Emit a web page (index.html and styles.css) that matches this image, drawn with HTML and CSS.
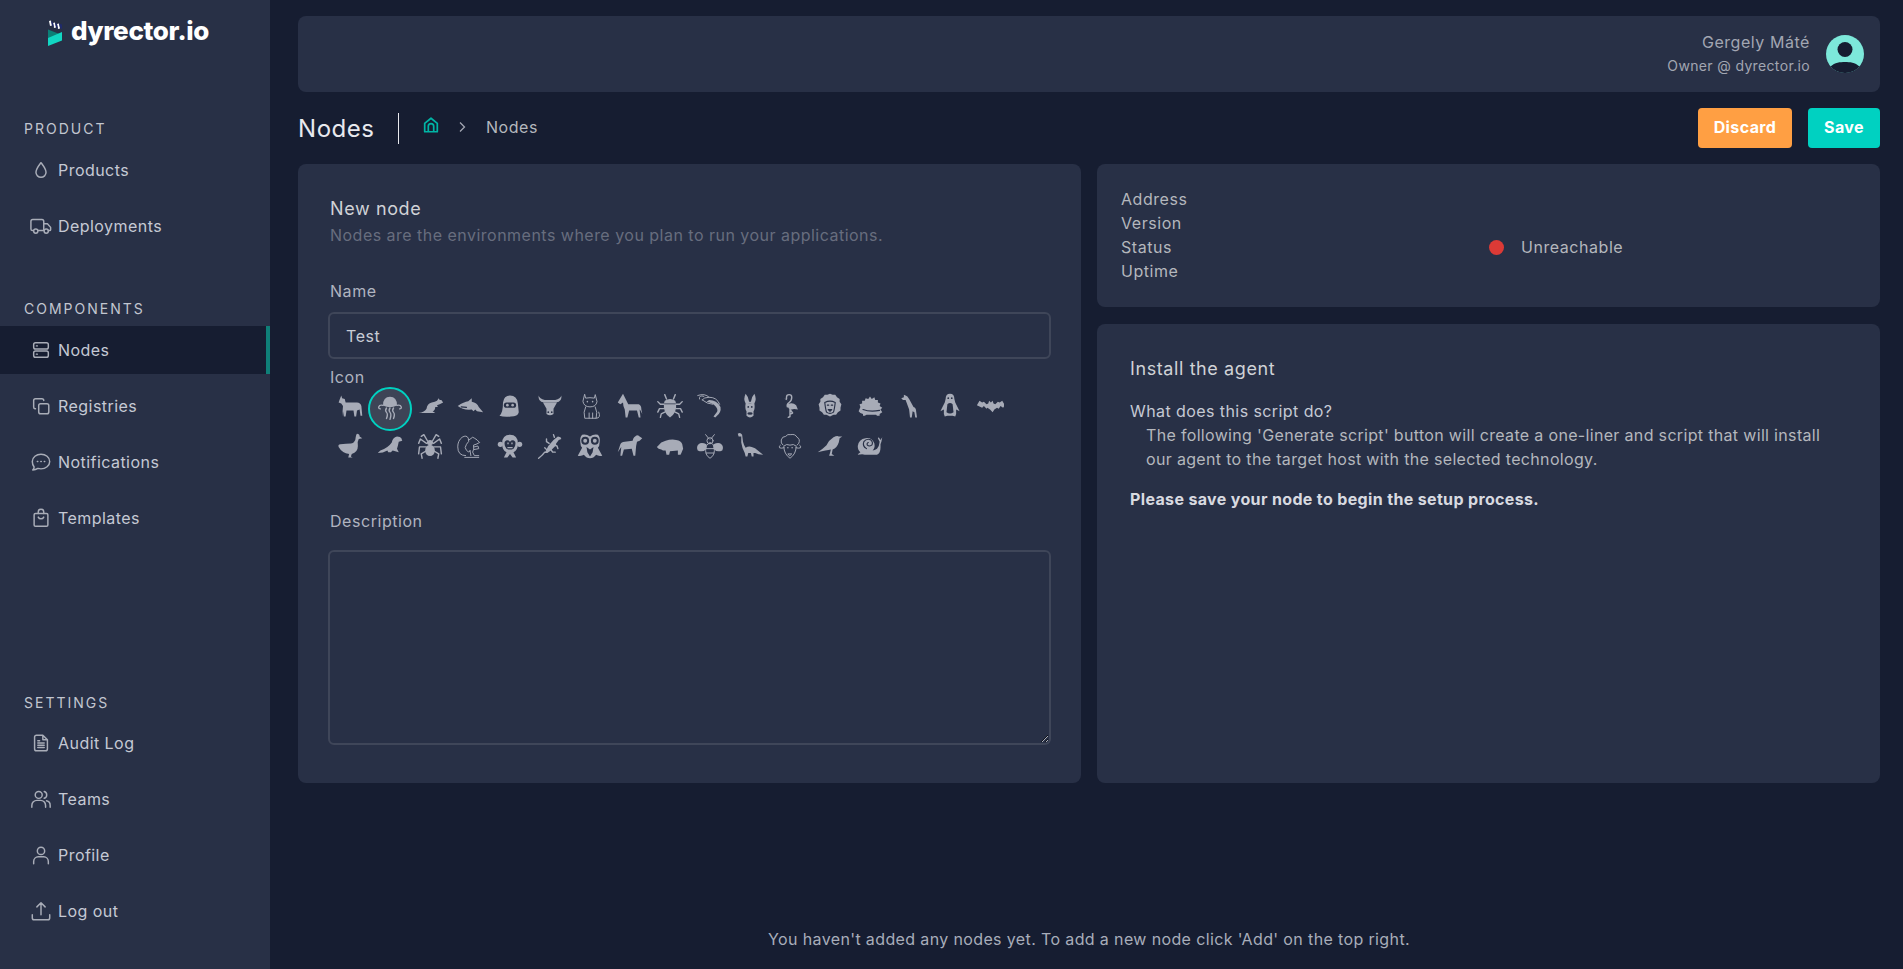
FILE: index.html
```html
<!DOCTYPE html>
<html lang="en">
<head>
<meta charset="utf-8">
<title>Nodes - dyrector.io</title>
<link rel="stylesheet" href="styles.css">
</head>
<body>
<svg class="defs" xmlns="http://www.w3.org/2000/svg">
  <symbol id="a-goat" viewBox="0 0 32 32"><path d="M4 9 6 4l1 3 3 1 1 4 13 0q4 0 5 4l1 11h-2l-1-7-3 1-1 7h-2l-1-7h-8l-1 7h-2l-1-6-1 6H7l1-12-2-3-3-1z"/></symbol>
  <symbol id="a-jelly" viewBox="0 0 32 32"><path d="M8 13Q8 3 16 3t8 10q-4 2-8 2t-8-2z"/><path class="ln" d="M8 13q-4-1-5 2 0 2 2 2M24 13q4-1 5 2 0 2-2 2M12 16q-2 3 0 5t0 7M16 16q-2 3 0 5t0 8M20 16q-2 3 0 5t0 7"/></symbol>
  <symbol id="a-roo" viewBox="0 0 32 32"><path d="M3 24q7-1 9-5 1-6 6-7 4-1 6-2l2-3 1 2h2l2 3-4 2-3 1 1 2h-3q0 4-3 5l3 2h-8q-6 0-11 0z"/></symbol>
  <symbol id="a-shark" viewBox="0 0 32 32"><path d="M2 16q7-5 12-5.500L18 7v4q6 1 8 6l5 6-7-1-2-2-2 2-2-2q-10 1-16-4z"/><path class="cutln" d="M6 17l6 .5"/></symbol>
  <symbol id="a-yeti" viewBox="0 0 32 32"><path d="M4 27q4-3 4-15Q9 4 16 4q8 0 9 9l1 10q-1 5-9 5-8 1-13-1z"/><rect class="cut" x="9" y="12" width="14" height="6" rx="3"/><circle cx="13" cy="15" r="1.500"/><circle cx="19" cy="15" r="1.500"/></symbol>
  <symbol id="a-bull" viewBox="0 0 32 32"><path d="M3 4q-1 7 6 8h14q7-1 6-8-1 4-7 5H10Q4 8 3 4z"/><path d="M8 12l4 7v6q4 3 8 0v-6l4-7z"/><circle class="cut" cx="14" cy="23" r="1"/><circle class="cut" cx="18" cy="23" r="1"/></symbol>
  <symbol id="a-cat" viewBox="0 0 32 32"><path class="ln1" d="M10 3l1 4q5-1 10 0l1-4 2 8q-1 6-8 6t-8-6zM11 17q-3 6-1 13h13q2-7-1-13M15 30v-6M19 30v-6M23 30q6 0 3-7"/><circle cx="13" cy="11" r=".9"/><circle cx="19" cy="11" r=".9"/></symbol>
  <symbol id="a-horse" viewBox="0 0 32 32"><path d="M8 2l2 4 4 8h12q3 1 3 6l1 5-2-4-1-1 1 9h-2l-2-8h-9l-2 8h-2l-1-9q-2-4-2-8l-3 2-3-2z"/></symbol>
  <symbol id="a-beetle" viewBox="0 0 32 32"><path d="M10 10q6-4 12 0l1 3H9zM9 14h14q1 10-7 15-8-5-7-15z"/><path class="ln" d="M12 8L10 3M20 8l2-5M9 14H5L2 11M9 19H4l-2 4M10 23l-4 2-1 4M23 14h4l3-3M23 19h5l2 4M22 23l4 2 1 4"/></symbol>
  <symbol id="a-shrimp" viewBox="0 0 32 32"><path class="ln1" d="M4 8Q3 3 9 5M2 4q8-3 13 2M7 9q2-3 8-3 9 0 12 8M7 9q6 5 12 5"/><path d="M15 9q9 0 13 8 1 6-4 10l-2 2-2-1 3-4q3-3 0-7-4-5-11-6z"/></symbol>
  <symbol id="a-donkey" viewBox="0 0 32 32"><path d="M11 2q-3 6 0 11l1 1 4-1 4 1 1-1q3-5 0-11-3 3-4 9h-2q-1-6-4-9z"/><path d="M11 13q-1 6 1 9l0 5q4 4 8 0v-5q2-3 1-9z"/><circle class="cut" cx="14" cy="17" r="1"/><circle class="cut" cx="18" cy="17" r="1"/><ellipse class="cut" cx="16" cy="24.500" rx="3" ry="1.500"/></symbol>
  <symbol id="a-flamingo" viewBox="0 0 32 32"><path class="ln" d="M12 8V6q0-3 3-3t3 3q0 4-3 6t-2 5M16 20v8l-2 1M16 20l3 4-2 1"/><path class="ln1" d="M11 8l1 1"/><path d="M13 14q6-3 10 1l2 5q-5-1-7 0-4 1-5-6z"/></symbol>
  <symbol id="a-lion" viewBox="0 0 32 32"><path d="M16 2l3 1 3 0 2 3 3 2 0 3 2 3-1 4 0 3-3 2-2 3-3 0-4 2-4-2-3 0-2-3-3-2 0-3-1-4 2-3 0-3 3-2 2-3 3 0z"/><path class="cutln" d="M10 12q6-3 12 0-1 8-2 11-4 3-8 0-1-3-2-11zM13 15h1.500M17.500 15H19M14 20h4l-2 2z"/></symbol>
  <symbol id="a-hedge" viewBox="0 0 32 32"><path d="M3 22l2-5-1-3 3-1v-3h3l1-3 3 1 2-3 2 3 3-2 1 3h3v3l3 1-1 3 3 2-2 2 2 3-3 2v2h-3l-1-1H12l-2 1H8v-2l-3-1z"/><path class="cutln" d="M8 20q8 3 19 1"/></symbol>
  <symbol id="a-giraffe" viewBox="0 0 32 32"><path d="M9 3l2 1 2 1 2 3 5 9q3 1 3 5l1 7h-2l-1-6-2-1-1 7h-2l-1-9-4-11-3 0-2-2 3-1z"/></symbol>
  <symbol id="a-penguin" viewBox="0 0 32 32"><path d="M16 2q5 0 5 6l1 4 3 6 2 4-4-2 0 5-1 3-3-1h-6l-3 1-1-3 0-5-4 2 2-4 3-6 1-4q0-6 5-6z"/><path class="cut" d="M13 14q3-3 6 0l1 9q-4 3-8 0z"/><circle class="cut" cx="14" cy="7" r="1"/><circle class="cut" cx="18" cy="7" r="1"/></symbol>
  <symbol id="a-bat" viewBox="0 0 32 32"><path d="M1 15l3-5 3 2 2-1 3 3 2-1 1-3 2 2 2-2 1 3 2 1 3-3 2 1 3-2 3 5-2 3-3-2-2 3-2-1-3 2-2 3-3-3-3-2-1 1-3-3-2 2z"/></symbol>
  <symbol id="a-duck" viewBox="0 0 32 32"><path d="M24 2q3 0 3 3l3 2-4 1q-2 3-1 8 0 7-7 9l-1 3 2 1h-5l1-4q-8-1-12-8-1-3 2-3 7-1 12-1 3 0 5-4 1-7 2-7z"/></symbol>
  <symbol id="a-seal" viewBox="0 0 32 32"><path d="M24 5q4 0 5 2l1 3-4 1q-1 5-2 8l2 4-7-2-2 2h-3l-1-2q-5 3-11 3l3-3q9-3 13-9 1-6 6-7z"/></symbol>
  <symbol id="a-spider" viewBox="0 0 32 32"><ellipse cx="16" cy="12" rx="3.500" ry="3"/><ellipse cx="16" cy="21" rx="5.500" ry="6.500"/><path class="ln" d="M13 10L9 3 6 5M19 10l4-7 3 2M12 13L5 8 3 13M20 13l7-5 2 5M11 17H4l-1 8M21 17h7l1 8M11 22l-5 3 1 5M21 22l5 3-1 5"/></symbol>
  <symbol id="a-squirrel" viewBox="0 0 32 32"><path class="ln1" d="M11 27Q2 27 2 17q0-7 5-11 5-3 7 1t-2 7q-3 4 0 7 2 3 4 1M15 9l4-3 2 1 3 2 3 3-4 2-3 1q1 5-1 8l2 4h5M21 17l4-1 1 3-5 1M10 29h16M16 21l1 6"/></symbol>
  <symbol id="a-monkey" viewBox="0 0 32 32"><circle cx="5" cy="14" r="3"/><circle cx="27" cy="14" r="3"/><path d="M16 3q9 0 9 10 0 8-5 10l3 6h-4l-3-4-3 4H9l3-6q-5-2-5-10 0-10 9-10z"/><path class="cut" d="M10 11q3-3 6 0 3-3 6 0 1 5-2 8-4 2-8 0-3-3-2-8z"/><path d="M13 17h6v1.500h-6zM13 12h1.500v2H13zM17.500 12H19v2h-1.500z"/></symbol>
  <symbol id="a-lizard" viewBox="0 0 32 32"><path class="ln" d="M3 30q5-4 7-7l1 0"/><path d="M10 24l4-8 6-7 5-4 3 1 1 2-3 1-3 4 0 2-6 6-4 3z"/><path class="ln" d="M15 13l-3-2 0-3M21 15l3 1 1 3M13 21l-3-3M17 20l2 3 3 0M21 6l-1-3"/></symbol>
  <symbol id="a-owl" viewBox="0 0 32 32"><path d="M16 5q4-3 9-2 3 3 2 9 0 4-2 6l5 9q-4 1-7-1-3 4-7 4t-7-4q-3 2-7 1l5-9q-2-2-2-6-1-6 2-9 5-1 9 2z"/><circle class="cut" cx="10.500" cy="10" r="4.500"/><circle class="cut" cx="21.500" cy="10" r="4.500"/><circle cx="10.500" cy="10" r="2.200"/><circle cx="21.500" cy="10" r="2.200"/><path class="cut" d="M12 17l4 3 4-3-1 6-3 5-3-5z"/></symbol>
  <symbol id="a-dog" viewBox="0 0 32 32"><path d="M22 4q3-1 5 1l3 2-3 3-3 1-1 5-1 11h-2l-2-8-9 1-2 7H5l1-10-4 6 3-9q1-3 5-3l9-1q1-5 5-6z"/></symbol>
  <symbol id="a-rhino" viewBox="0 0 32 32"><path d="M1 17l2-2 3-3 5-2q6-2 12-1 6 1 7 5l1 5-2 5-1 2-3 0 0-5-9 1-1 4h-3l-1-5-3 0-2-1-3-1z"/></symbol>
  <symbol id="a-bee" viewBox="0 0 32 32"><path d="M12 14Q6 11 3 14t-1 7q6 3 10-2zM20 14q6-3 9 0t1 7q-6 3-10-2z"/><circle class="ln1" cx="16" cy="10" r="3.500"/><path class="ln1" d="M15 8L11 3M17 8l4-5"/><path class="ln1" d="M16 13q-5 0-5 8 0 6 5 9 5-3 5-9 0-8-5-9zM11 19h10M11.500 24h9"/></symbol>
  <symbol id="a-dino" viewBox="0 0 32 32"><path d="M2 2q3-2 5 1l1 8q1 4 3 7 3-2 7-1t7 4l6 5q-6 0-9-2l-2 0 0 4h-2l-1-4-3 0-1 4h-2l-1-4q-3-5-4-12L6 5H3z"/></symbol>
  <symbol id="a-sheep" viewBox="0 0 32 32"><path class="ln1" d="M8 15q-3-2-2-6t5-4q2-3 6-2 5-1 7 3 4 2 2 7l-2 2M5 15q-2 1-1 3 2 1 5 0M27 15q2 1 1 3-2 1-5 0M9 17q0 8 7 13 7-5 7-13M9 16q3-3 7-1 4-2 7 1M13 18h1M18 18h1M14 25h4l-2 2z"/></symbol>
  <symbol id="a-bird" viewBox="0 0 32 32"><path d="M30 5l-3 2-1 5q-2 6-7 8l-1 5 3 2h-6l1-3 1-4q-5 1-15 3 6-4 10-8 3-6 8-9 4-2 6-1z"/></symbol>
  <symbol id="a-snail" viewBox="0 0 32 32"><path d="M2 26q6-1 8 0h14q4-2 4-8l0-4 1-3 1-5-2 3-2-3-1 1 2 4-1 5-2 3q-3 2-5 2 3-3 2-8-3-7-10-6-8 1-9 9 0 5 3 7-3 2-3 3z"/><path class="cutln" d="M12 19q-5-3-3-8 3-4 8-2 3 3 1 6-3 2-5 0-1-2 1-3"/></symbol>
</svg>

<div class="app">
  <aside class="sidebar">
    <div class="logo">
      <svg class="logo-mark" viewBox="0 0 14 25" xmlns="http://www.w3.org/2000/svg">
        <path class="mark-a" d="M1 0l2-.5 1 5-2 .5zM5 2l2-.5 1 5-2 .5zM9 3l2-.5 1 5-2 .5z"/>
        <path class="mark-b" d="M3-.5l2 2 1 5-2-2zM7 1.500l2 1.500 1 5-2-2zM11 2.500l3 1v5l-2-2z"/>
        <path class="mark-c" d="M0 8.500l14 5.500-14 6z"/>
        <path class="mark-d" d="M0 17L14 11v8.500L0 25z"/>
      </svg>
      <span class="logo-text">dyrector.io</span>
    </div>

    <nav class="groups">
      <div class="group group-product">
        <h4 class="group-title">PRODUCT</h4>
        <a class="item"><svg class="ic" viewBox="0 0 24 24"><path d="M12 4C9 8 6.500 11 6.500 14.500a5.500 5.500 0 0 0 11 0C17.500 11 15 8 12 4z"/></svg><span>Products</span></a>
        <a class="item"><svg class="ic" viewBox="0 0 24 24"><path d="M15 17H9M3.500 17H2.800a1.800 1.800 0 0 1-1.800-1.800V7a2 2 0 0 1 2-2h10a2 2 0 0 1 2 2v10M15 9.500h4l3.500 4V16a1 1 0 0 1-1 1H20"/><circle cx="6.300" cy="17.500" r="2.300"/><circle cx="17.700" cy="17.500" r="2.300"/></svg><span>Deployments</span></a>
      </div>
      <div class="group group-components">
        <h4 class="group-title">COMPONENTS</h4>
        <a class="item item-active"><svg class="ic" viewBox="0 0 24 24"><rect x="4" y="4" width="16" height="7" rx="2"/><rect x="4" y="13" width="16" height="7" rx="2"/><path d="M7 7.500h1M7 16.500h1"/></svg><span>Nodes</span></a>
        <a class="item"><svg class="ic" viewBox="0 0 24 24"><rect x="9.500" y="9.500" width="11" height="11" rx="2"/><path d="M6 15H5.500A2 2 0 0 1 4 13V6a2 2 0 0 1 2-2h7a2 2 0 0 1 2 1.500V6"/></svg><span>Registries</span></a>
        <a class="item"><svg class="ic" viewBox="0 0 24 24"><path d="M12 3.500c5 0 9.500 3.400 9.500 8s-4.500 8-9.500 8c-1.200 0-2.300-.2-3.400-.5-1.800 1.200-3.500 1.700-5.600 1.800 1-1 1.500-2 1.500-3.300C3.400 16 2.500 13.900 2.500 11.500c0-4.600 4.500-8 9.500-8z"/><path d="M8 11.500h.5M11.800 11.500h.5M15.600 11.500h.5"/></svg><span>Notifications</span></a>
        <a class="item"><svg class="ic" viewBox="0 0 24 24"><rect x="4.500" y="7" width="15" height="14" rx="1.500"/><path d="M9 7V5.500a3 3 0 0 1 6 0V7M9 11a3.300 3.300 0 0 0 6 0"/></svg><span>Templates</span></a>
      </div>
      <div class="group group-settings">
        <h4 class="group-title">SETTINGS</h4>
        <a class="item"><svg class="ic" viewBox="0 0 24 24"><path d="M14 3.500H7a2 2 0 0 0-2 2v13a2 2 0 0 0 2 2h10a2 2 0 0 0 2-2V8.500zM14 3.500v5h5M8.500 12h7M8.500 14.500h7M8.500 17h7M8.500 9.500h2"/></svg><span>Audit Log</span></a>
        <a class="item"><svg class="ic" viewBox="0 0 24 24"><circle cx="9.500" cy="7.500" r="3.800"/><path d="M2 21v-2a5.500 5.500 0 0 1 5.500-5.500h4A5.500 5.500 0 0 1 17 19v2M15.500 3.900a3.800 3.800 0 0 1 0 7.300M18 14a5 5 0 0 1 4 5v2"/></svg><span>Teams</span></a>
        <a class="item"><svg class="ic" viewBox="0 0 24 24"><circle cx="12" cy="7.500" r="4"/><path d="M4 21.500v-2.500a5 5 0 0 1 5-5h6a5 5 0 0 1 5 5v2.500"/></svg><span>Profile</span></a>
        <a class="item"><svg class="ic" viewBox="0 0 24 24"><path d="M12 16V3M7.500 7.500L12 3l4.500 4.500M2.500 16v3.500a2 2 0 0 0 2 2h15a2 2 0 0 0 2-2V16"/></svg><span>Log out</span></a>
      </div>
    </nav>
  </aside>

  <main class="main">
    <header class="topbar">
      <div class="user">
        <div class="user-name">Gergely Máté</div>
        <div class="user-role">Owner @ dyrector.io</div>
      </div>
      <svg class="avatar" viewBox="0 0 38 38" xmlns="http://www.w3.org/2000/svg">
        <circle class="avatar-bg" cx="19" cy="19" r="19"/>
        <circle class="avatar-fg" cx="19" cy="14.500" r="7.500"/>
        <path class="avatar-fg" d="M4.500 31.500C9 27.500 14 27 19 27s10 .5 14.500 4.500A19 19 0 0 1 19 38a19 19 0 0 1-14.500-6.500z"/>
      </svg>
    </header>

    <div class="pagehead">
      <h1 class="page-title">Nodes</h1>
      <div class="crumbs">
        <svg class="home" viewBox="0 0 20 20" xmlns="http://www.w3.org/2000/svg"><path d="M3 17.500V8.200L10 2.500l7 5.700v9.300zM7 17.500v-6a3 3 0 0 1 6 0v6"/></svg>
        <svg class="chev" viewBox="0 0 10 12" xmlns="http://www.w3.org/2000/svg"><path d="M3 1.500L7.500 6 3 10.500"/></svg>
        <span class="crumb">Nodes</span>
      </div>
      <div class="actions">
        <button class="btn btn-discard" type="button">Discard</button>
        <button class="btn btn-save" type="button">Save</button>
      </div>
    </div>

    <div class="content">
      <section class="card card-form">
        <h2 class="card-title">New node</h2>
        <p class="card-sub">Nodes are the environments where you plan to run your applications.</p>
        <label class="field-label label-name" for="name">Name</label>
        <input class="input" id="name" type="text" value="Test">
        <div class="field-label label-icon">Icon</div>
        <div class="icons">
          <svg class="animal"><use href="#a-goat"/></svg>
          <span class="selected"><svg class="animal"><use href="#a-jelly"/></svg></span>
          <svg class="animal"><use href="#a-roo"/></svg>
          <svg class="animal"><use href="#a-shark"/></svg>
          <svg class="animal"><use href="#a-yeti"/></svg>
          <svg class="animal"><use href="#a-bull"/></svg>
          <svg class="animal"><use href="#a-cat"/></svg>
          <svg class="animal"><use href="#a-horse"/></svg>
          <svg class="animal"><use href="#a-beetle"/></svg>
          <svg class="animal"><use href="#a-shrimp"/></svg>
          <svg class="animal"><use href="#a-donkey"/></svg>
          <svg class="animal"><use href="#a-flamingo"/></svg>
          <svg class="animal"><use href="#a-lion"/></svg>
          <svg class="animal"><use href="#a-hedge"/></svg>
          <svg class="animal"><use href="#a-giraffe"/></svg>
          <svg class="animal"><use href="#a-penguin"/></svg>
          <svg class="animal"><use href="#a-bat"/></svg>
          <svg class="animal"><use href="#a-duck"/></svg>
          <svg class="animal"><use href="#a-seal"/></svg>
          <svg class="animal"><use href="#a-spider"/></svg>
          <svg class="animal"><use href="#a-squirrel"/></svg>
          <svg class="animal"><use href="#a-monkey"/></svg>
          <svg class="animal"><use href="#a-lizard"/></svg>
          <svg class="animal"><use href="#a-owl"/></svg>
          <svg class="animal"><use href="#a-dog"/></svg>
          <svg class="animal"><use href="#a-rhino"/></svg>
          <svg class="animal"><use href="#a-bee"/></svg>
          <svg class="animal"><use href="#a-dino"/></svg>
          <svg class="animal"><use href="#a-sheep"/></svg>
          <svg class="animal"><use href="#a-bird"/></svg>
          <svg class="animal"><use href="#a-snail"/></svg>
        </div>
        <label class="field-label label-desc" for="desc">Description</label>
        <textarea class="textarea" id="desc"></textarea>
      </section>

      <div class="col">
        <section class="card card-info">
          <div class="info-grid">
            <span>Address</span><span></span>
            <span>Version</span><span></span>
            <span>Status</span><span class="status"><i class="dot"></i>Unreachable</span>
            <span>Uptime</span><span></span>
          </div>
        </section>
        <section class="card card-agent">
          <h2 class="card-title">Install the agent</h2>
          <p class="agent-q">What does this script do?</p>
          <p class="agent-a">The following 'Generate script' button will create a one-liner and script that will install our agent to the target host with the selected technology.</p>
          <p class="agent-b">Please save your node to begin the setup process.</p>
        </section>
      </div>
    </div>

    <p class="empty">You haven't added any nodes yet. To add a new node click 'Add' on the top right.</p>
  </main>
</div>
</body>
</html>
```

FILE: styles.css
```css
* { box-sizing: border-box; }
html, body { margin: 0; height: 100%; }
body {
  background: #161d31;
  color: #b4b7bd;
  font-family: "Inter", "Noto Sans", sans-serif;
  font-size: 16px;
  letter-spacing: .55px;
  overflow: hidden;
}
.defs { display: none; }

.app { display: flex; height: 969px; }

/* sidebar */
.sidebar {
  width: 270px;
  flex: none;
  background: #283046;
  display: flex;
  flex-direction: column;
}
.logo {
  display: flex;
  align-items: center;
  gap: 9px;
  padding: 0 0 0 48px;
  height: 62px;
}
.logo-mark { width: 14px; height: 25px; margin-top: 5px; overflow: visible; }
.mark-a { fill: #ffffff; }
.mark-b { fill: #1f2a6b; }
.mark-c { fill: #0b7f77; }
.mark-d { fill: #12d6c3; }
.logo-text {
  color: #fff;
  font-size: 26px;
  font-weight: 800;
  letter-spacing: -.35px;
  line-height: 26px;
}
.group-title {
  margin: 0 0 5px;
  padding-left: 24px;
  height: 24px;
  line-height: 24px;
  font-size: 14px;
  font-weight: 400;
  letter-spacing: 2px;
  color: #c2c6d0;
}
.group-product { margin-top: 55px; }
.group-components { margin-top: 47px; }
.group-settings { margin-top: 149px; }
.group-settings .group-title { margin-bottom: 4px; }
.item {
  display: flex;
  align-items: center;
  gap: 6px;
  height: 48px;
  padding-left: 30px;
  margin-bottom: 8px;
  color: #c5c9d4;
  letter-spacing: .45px;
}
.item-active {
  background: #161d31;
  border-right: 4px solid #0f7f78;
}
.ic {
  width: 22px;
  height: 22px;
  fill: none;
  stroke: #a9adb8;
  stroke-width: 1.6;
  stroke-linecap: round;
  stroke-linejoin: round;
}

/* main */
.main {
  flex: 1;
  min-width: 0;
  padding: 16px 23px 0 28px;
  display: flex;
  flex-direction: column;
}
.topbar {
  height: 76px;
  flex: none;
  background: #283046;
  border-radius: 8px;
  display: flex;
  align-items: center;
  justify-content: flex-end;
  gap: 16px;
  padding-right: 16px;
}
.user { text-align: right; color: #a2a6b2; }
.user-name { font-size: 16px; line-height: 23px; }
.user-role { font-size: 14px; line-height: 23px; letter-spacing: .35px; }
.avatar { width: 38px; height: 38px; flex: none; }
.avatar-bg { fill: #7de8da; }
.avatar-fg { fill: #161d31; }

.pagehead {
  display: flex;
  align-items: center;
  height: 40px;
  margin-top: 16px;
  flex: none;
}
.page-title {
  margin: 0;
  box-sizing: content-box;
  width: 100px;
  height: 31px;
  line-height: 31px;
  font-size: 24px;
  font-weight: 400;
  color: #e8e9ee;
  border-right: 1px solid #e8e9ee;
}
.crumbs { display: flex; align-items: center; padding-left: 23px; margin-top: -2px; color: #b4b7bd; }
.home { width: 18px; height: 18px; margin-top: -4px; fill: none; stroke: #00b5a5; stroke-width: 1.9; stroke-linejoin: round; }
.chev { width: 10px; height: 12px; margin-left: 17px; fill: none; stroke: #a2a6b2; stroke-width: 1.3; }
.crumb { margin-left: 19px; }
.actions { margin-left: auto; display: flex; gap: 16px; }
.btn {
  height: 40px;
  border: 0;
  border-radius: 4px;
  color: #fff;
  font: 700 16px "Inter", sans-serif;
  letter-spacing: .4px;
  padding: 0 0 2px;
}
.btn-discard { width: 94px; background: #ff9f43; }
.btn-save { width: 72px; background: #00d1c1; }

.content {
  margin-top: 16px;
  display: grid;
  grid-template-columns: 783px 783px;
  gap: 16px;
  height: 619px;
  flex: none;
}
.card { background: #283046; border-radius: 8px; }
.card-title { margin: 0; font-size: 18px; font-weight: 400; line-height: 28px; color: #d0d2d6; letter-spacing: .6px; }

.card-form { padding: 31px 30px 0 30px; display: flex; flex-direction: column; }
.card-form .card-title { padding-left: 2px; }
.card-sub { margin: 0; padding-left: 2px; line-height: 24px; color: #676d7e; letter-spacing: .48px; }
.field-label { display: block; line-height: 24px; padding-left: 2px; color: #b0b4c0; }
.label-name { margin-top: 32px; }
.input {
  margin-top: 9px;
  width: 723px;
  height: 47px;
  background: transparent;
  border: 2px solid #3f4659;
  border-radius: 6px;
  padding: 0 16px;
  font: 16px "Inter", sans-serif;
  letter-spacing: .55px;
  color: #c8ccd6;
  outline: none;
}
.label-icon { margin-top: 6px; }
.icons {
  display: grid;
  grid-template-columns: repeat(17, 40px);
  grid-auto-rows: 40px;
  height: 80px;
  margin-top: -3px;
  padding-left: 2px;
}
.animal {
  width: 28px;
  height: 28px;
  margin: 6px;
  fill: #a7abb7;
  stroke: none;
}
.ln { fill: none; stroke: #a7abb7; stroke-width: 1.6; stroke-linecap: round; stroke-linejoin: round; }
.ln1 { fill: none; stroke: #a7abb7; stroke-width: 1.1; stroke-linecap: round; stroke-linejoin: round; }
.cut { fill: #283046; }
.cutln { fill: none; stroke: #283046; stroke-width: 1.3; stroke-linecap: round; stroke-linejoin: round; }
.selected {
  display: block;
  width: 44px;
  height: 44px;
  margin: 1px 0 0 -2px;
  background: #3d4456;
  border: 2px solid #00d1c1;
  border-radius: 50%;
}
.selected .animal { margin: 5px 6px 0; }
.label-desc { margin-top: 43px; }
.textarea {
  margin-top: 17px;
  width: 723px;
  height: 195px;
  background: transparent;
  border: 2px solid #3f4659;
  border-radius: 6px;
  outline: none;
  resize: vertical;
  color: #c8ccd6;
}

.col { display: flex; flex-direction: column; gap: 17px; }
.card-info { height: 143px; padding: 23px 24px; flex: none; }
.info-grid {
  display: grid;
  grid-template-columns: 368px 1fr;
  grid-auto-rows: 24px;
  line-height: 24px;
}
.status { display: flex; align-items: center; gap: 17px; }
.dot { width: 15px; height: 15px; border-radius: 50%; background: #dc3a36; }
.card-agent { flex: 1; padding: 31px 33px; }
.agent-q { margin: 16px 0 0; line-height: 24px; color: #c5c9d4; letter-spacing: .42px; }
.agent-a { margin: 0; padding-left: 16px; line-height: 24px; letter-spacing: .33px; }
.agent-b { margin: 16px 0 0; line-height: 24px; font-weight: 700; color: #d8dae0; letter-spacing: .35px; }

.empty {
  margin: 144px 0 0;
  text-align: center;
  line-height: 24px;
  color: #a8adba;
  letter-spacing: .37px;
}
```
